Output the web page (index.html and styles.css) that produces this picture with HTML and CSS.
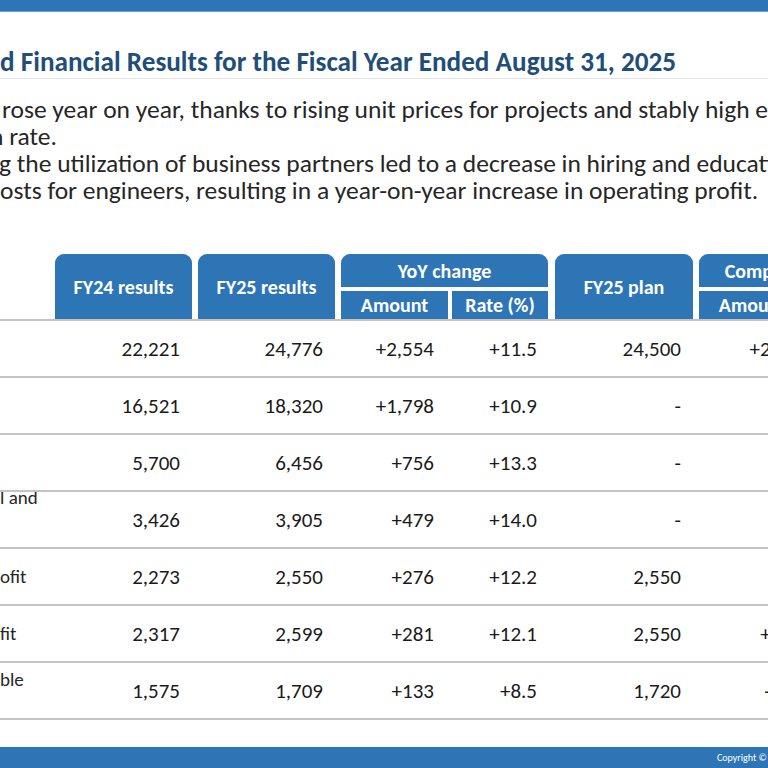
FILE: index.html
```html
<!DOCTYPE html>
<html lang="en">
<head>
    <meta charset="UTF-8">
    <meta name="viewport" content="width=device-width, initial-scale=1.0">
    <title>Consolidated Financial Results | FY2025</title>
    <link rel="stylesheet" href="styles.css">
</head>
<body>
    <div class="top-bar"></div>
    <h1 class="slide-title">d Financial Results for the Fiscal Year Ended August 31, 2025</h1>
    <div class="summary">
        <p class="line-1">rose year on year, thanks to rising unit prices for projects and stably high engineer utilization</p>
        <p class="line-2">n rate.</p>
        <p class="line-3">g the utilization of business partners led to a decrease in hiring and education costs</p>
        <p class="line-4">osts for engineers, resulting in a year-on-year increase in operating profit.</p>
    </div>

    <div class="results">
        <div class="results-head">
            <div class="head-label"></div>
            <div class="head-cell">FY24 results</div>
            <div class="head-cell">FY25 results</div>
            <div class="head-group head-yoy">
                <div class="group-title">YoY change</div>
                <div class="group-sub">
                    <div class="sub-cell sub-amount">Amount</div>
                    <div class="sub-cell sub-rate">Rate (%)</div>
                </div>
            </div>
            <div class="head-cell">FY25 plan</div>
            <div class="head-group head-plan">
                <div class="group-title">Comparison to plan</div>
                <div class="group-sub">
                    <div class="sub-cell sub-amount">Amount</div>
                    <div class="sub-cell sub-rate">Rate (%)</div>
                </div>
            </div>
        </div>

        <div class="row">
            <div class="label"></div>
            <div class="num">22,221</div><div class="num">24,776</div>
            <div class="num">+2,554</div><div class="num">+11.5</div>
            <div class="num">24,500</div><div class="num">+276</div><div class="num">+1.1</div>
        </div>
        <div class="row">
            <div class="label"></div>
            <div class="num">16,521</div><div class="num">18,320</div>
            <div class="num">+1,798</div><div class="num">+10.9</div>
            <div class="num">-</div><div class="num">-</div><div class="num">-</div>
        </div>
        <div class="row">
            <div class="label"></div>
            <div class="num">5,700</div><div class="num">6,456</div>
            <div class="num">+756</div><div class="num">+13.3</div>
            <div class="num">-</div><div class="num">-</div><div class="num">-</div>
        </div>
        <div class="row">
            <div class="label"><span>l and</span><span>&nbsp;</span><span>&nbsp;</span></div>
            <div class="num">3,426</div><div class="num">3,905</div>
            <div class="num">+479</div><div class="num">+14.0</div>
            <div class="num">-</div><div class="num">-</div><div class="num">-</div>
        </div>
        <div class="row">
            <div class="label">ofit</div>
            <div class="num">2,273</div><div class="num">2,550</div>
            <div class="num">+276</div><div class="num">+12.2</div>
            <div class="num">2,550</div><div class="num">+0</div><div class="num">+0.0</div>
        </div>
        <div class="row">
            <div class="label">fit</div>
            <div class="num">2,317</div><div class="num">2,599</div>
            <div class="num">+281</div><div class="num">+12.1</div>
            <div class="num">2,550</div><div class="num">+49</div><div class="num">+1.9</div>
        </div>
        <div class="row">
            <div class="label"><span>ble</span><span>&nbsp;</span></div>
            <div class="num">1,575</div><div class="num">1,709</div>
            <div class="num">+133</div><div class="num">+8.5</div>
            <div class="num">1,720</div><div class="num">-11</div><div class="num">-0.6</div>
        </div>
    </div>

    <footer class="bottom-bar">
        <span>Copyright &copy; 2025 All Rights Reserved.</span>
    </footer>
</body>
</html>
```

FILE: styles.css
```css
html, body {
    margin: 0;
    padding: 0;
}
body {
    width: 768px;
    height: 768px;
    overflow: hidden;
    background-color: #ffffff;
    color: #262626;
    font-family: Carlito, Calibri, Lato, "Liberation Sans", sans-serif;
    display: flex;
    flex-direction: column;
}
.top-bar {
    height: 11px;
    background-color: #2e75b6;
    border-bottom: 1px solid #6fa0cf;
    flex-shrink: 0;
}
.slide-title {
    margin: 33px 0 0;
    height: 33px;
    line-height: 33px;
    font-size: 27.2px;
    font-weight: bold;
    color: #1f4e79;
    white-space: nowrap;
    border-bottom: 1px solid #e3e3e3;
}
.summary {
    margin-top: 17px;
}
.summary p {
    margin: 0;
    height: 27px;
    line-height: 27px;
    font-size: 25.5px;
    white-space: nowrap;
}
.summary .line-1 {
    margin-left: 2px;
}
.summary .line-2 {
    margin-left: -10px;
}
.summary .line-3 {
    margin-left: -1px;
}
.summary .line-4 {
    margin-left: 0;
}

/* table */
.results {
    margin-top: 50px;
}
.results-head,
.row {
    display: grid;
    grid-template-columns: 55px 143px 143px 111px 103px 144px 111px 110px;
}
.results-head {
    height: 65px;
    border-bottom: 2px solid #c4c4c4;
    grid-template-columns: 55px 143px 143px 214px 144px 221px;
}
.head-cell {
    margin-right: 6px;
    background-color: #2e75b6;
    color: #ffffff;
    font-size: 20px;
    font-weight: bold;
    border-radius: 9px 9px 0 0;
    display: flex;
    align-items: center;
    justify-content: center;
    white-space: nowrap;
}
.head-group {
    margin-right: 7px;
    display: flex;
    flex-direction: column;
    gap: 4px;
}
.group-title {
    height: 33px;
    background-color: #2e75b6;
    border-radius: 9px 9px 0 0;
    color: #ffffff;
    font-size: 20px;
    font-weight: bold;
    display: flex;
    align-items: center;
    justify-content: center;
    white-space: nowrap;
}
.group-sub {
    flex: 1;
    display: flex;
    gap: 4px;
}
.sub-cell {
    background-color: #2e75b6;
    color: #ffffff;
    font-size: 20px;
    font-weight: bold;
    display: flex;
    align-items: center;
    justify-content: center;
    white-space: nowrap;
}
.sub-amount {
    width: 107px;
}
.sub-rate {
    flex: 1;
}
.row {
    height: 55px;
    border-bottom: 2px solid #c4c4c4;
}
.label {
    font-size: 19px;
    line-height: 22px;
    display: flex;
    flex-direction: column;
    justify-content: center;
    white-space: nowrap;
    overflow: hidden;
}
.num {
    font-size: 21px;
    padding-right: 18px;
    display: flex;
    align-items: center;
    justify-content: flex-end;
    white-space: nowrap;
    color: #1a1a1a;
}

.bottom-bar {
    margin-top: auto;
    height: 21px;
    background-color: #2e75b6;
    color: #ffffff;
    font-size: 10px;
    display: flex;
    align-items: center;
    padding-left: 717px;
    white-space: nowrap;
}
```
